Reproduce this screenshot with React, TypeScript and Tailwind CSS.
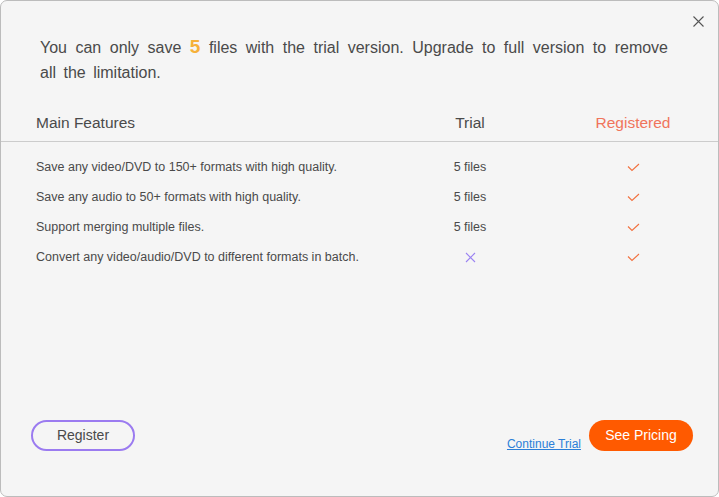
import React from "react";

const rows = [
  { text: "Save any video/DVD to 150+ formats with high quality.", trial: "5 files" },
  { text: "Save any audio to 50+ formats with high quality.", trial: "5 files" },
  { text: "Support merging multiple files.", trial: "5 files" },
  { text: "Convert any video/audio/DVD to different formats in batch.", trial: null },
];

function Check() {
  return (
    <svg width="13" height="9" viewBox="0 0 13 9" fill="none">
      <path d="M1 3.5 L5 7.5 L12 1" stroke="#f2713f" strokeWidth="1.1" />
    </svg>
  );
}

function Cross() {
  return (
    <svg width="11" height="11" viewBox="0 0 11 11" fill="none">
      <path d="M1 1 L10 10 M10 1 L1 10" stroke="#9b83f2" strokeWidth="1.1" />
    </svg>
  );
}

export default function App() {
  return (
    <div
      className="w-[719px] h-[497px] bg-[#f5f5f5] border border-[#bcbcbc] rounded-[7px] relative flex flex-col text-[#4a4a4a] overflow-hidden"
      style={{ fontFamily: '"Liberation Sans", Arial, sans-serif' }}
    >
      <button className="absolute right-[14px] top-[14px] w-[12px] h-[12px] flex items-center justify-center">
        <svg width="11" height="11" viewBox="0 0 11 11" fill="none">
          <path d="M0.5 0.5 L10.5 10.5 M10.5 0.5 L0.5 10.5" stroke="#555" strokeWidth="1.1" />
        </svg>
      </button>

      <div className="mt-[33px] ml-[39px] w-[628px] text-[16px] leading-[25px]">
        <p className="text-justify [text-align-last:justify]">
          You can only save{" "}
          <span className="text-[#f6b13a] font-bold text-[19px]">5</span> files with
          the trial version. Upgrade to full version to remove
        </p>
        <p className="[word-spacing:3px]">all the limitation.</p>
      </div>

      <div className="mt-[23px] flex items-center pl-[35px] h-[30px] text-[15.5px]">
        <div className="flex-1">Main Features</div>
        <div className="w-[100px] text-center">Trial</div>
        <div className="w-[100px] ml-[63px] mr-[35px] text-center text-[#f0745c]">Registered</div>
      </div>
      <div className="mt-[3px] h-px bg-[#cccccc]" />

      <div className="mt-[10px] flex flex-col">
        {rows.map((r, i) => (
          <div key={i} className="flex items-center h-[30px] pl-[35px] text-[12.5px]">
            <div className="flex-1">{r.text}</div>
            <div className="w-[100px] text-center flex justify-center">
              {r.trial ? r.trial : <Cross />}
            </div>
            <div className="w-[100px] ml-[63px] mr-[35px] flex justify-center">
              <Check />
            </div>
          </div>
        ))}
      </div>

      <div className="mt-auto mb-[45px] flex items-end px-[30px]">
        <button className="w-[104px] h-[31px] rounded-full border-2 border-[#9b7bf0] text-[14px] text-[#4a4a4a] flex items-center justify-center">
          Register
        </button>
        <div className="flex-1" />
        <a className="text-[12px] text-[#2b7fd8] underline mr-[8px] mb-[-2px]" href="#">
          Continue Trial
        </a>
        <button className="w-[104px] h-[31px] mr-[-5px] rounded-full bg-[#ff5a00] text-white text-[14px] flex items-center justify-center">
          See Pricing
        </button>
      </div>
    </div>
  );
}
